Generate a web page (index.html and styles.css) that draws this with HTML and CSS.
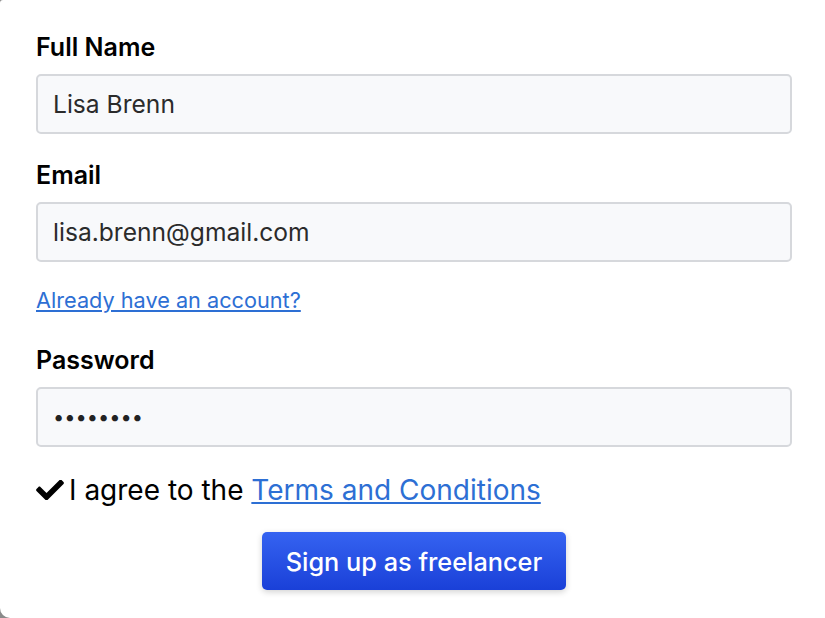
FILE: index.html
```html
<!DOCTYPE html>
<html>
<head>
<meta charset="utf-8">
<link rel="stylesheet" href="styles.css">
</head>
<body>
<div class="card">
  <form class="form">
    <div class="field">
      <label class="label">Full Name</label>
      <div class="input">Lisa Brenn</div>
    </div>
    <div class="field">
      <label class="label">Email</label>
      <div class="input">lisa.brenn@gmail.com</div>
    </div>
    <a class="login-link" href="#">Already have an account?</a>
    <div class="field">
      <label class="label">Password</label>
      <div class="input dots">••••••••</div>
    </div>
    <div class="agree">
      <svg class="check" viewBox="0 72 512 368" width="28" height="20"><path d="M173.898 439.404l-166.4-166.4c-9.997-9.997-9.997-26.206 0-36.204l36.203-36.204c9.997-9.998 26.207-9.998 36.204 0L192 312.690 432.095 72.596c9.997-9.997 26.207-9.997 36.204 0l36.203 36.204c9.997 9.997 9.997 26.206 0 36.204l-294.4 294.401c-9.998 9.997-26.207 9.997-36.204-.001z" fill="#000"/></svg>
      <span>I agree to the <a class="terms" href="#">Terms and Conditions</a></span>
    </div>
    <div class="actions">
      <button class="btn" type="button">Sign up as freelancer</button>
    </div>
  </form>
</div>
</body>
</html>
```
FILE: styles.css
```css
* { box-sizing: border-box; }
html, body { margin: 0; padding: 0; }
body {
  background: #8a8a8a;
  width: 825px;
  height: 618px;
  overflow: hidden;
  font-family: Inter, "Noto Sans", sans-serif;
}
.card {
  background: #fff;
  width: 825px;
  height: 618px;
  border-radius: 3px 0 0 10px;
}
.form {
  padding: 32px 33px 0 36px;
  display: flex;
  flex-direction: column;
}
.field {
  display: flex;
  flex-direction: column;
}
.label {
  font-size: 25px;
  line-height: 30px;
  font-weight: 600;
  color: #000;
  margin-bottom: 12px;
}
.input {
  height: 60px;
  border: 2px solid #d6d8dc;
  border-radius: 5px;
  background: #f8f9fb;
  padding: 0 15px;
  display: flex;
  align-items: center;
  font-size: 24.6px;
  color: #2b2b2b;
  margin-bottom: 26px;
}
.dots {
  font-size: 20px;
  color: #222;
}
.login-link {
  font-size: 21.7px;
  line-height: 26px;
  color: #2d6fd4;
  margin-top: -1px;
  margin-bottom: 32px;
  align-self: flex-start;
}
.agree {
  display: flex;
  align-items: center;
  gap: 5px;
  font-size: 28px;
  line-height: 34px;
  color: #000;
  margin-top: 0;
}
.check { flex: none; }
.terms { color: #2d6fd4; }
.actions {
  display: flex;
  justify-content: center;
  margin-top: 25px;
}
.btn {
  width: 304px;
  height: 58px;
  border: none;
  border-radius: 5px;
  background: linear-gradient(#3563f1, #1a40d8);
  color: #fff;
  font-family: Inter, "Noto Sans", sans-serif;
  font-size: 25.3px;
  font-weight: 500;
  box-shadow: 0 2px 6px rgba(0,0,0,0.18);
}
```
